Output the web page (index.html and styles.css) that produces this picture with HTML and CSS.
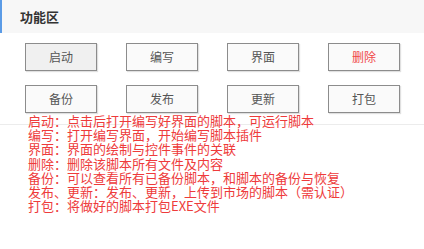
FILE: index.html
```html
<!DOCTYPE html>
<html lang="zh">
<head>
    <meta charset="UTF-8">
    <meta name="viewport" content="width=device-width, initial-scale=1.0">
    <link rel="stylesheet" href="styles.css">
</head>
<body>

<div class="header">功能区</div>

<div class="panel">
    <div class="btn active">启动</div>
    <div class="btn">编写</div>
    <div class="btn">界面</div>
    <div class="btn danger">删除</div>
    <div class="btn">备份</div>
    <div class="btn">发布</div>
    <div class="btn">更新</div>
    <div class="btn">打包</div>
</div>

<div class="notes">
    <div>启动：点击后打开编写好界面的脚本，可运行脚本</div>
    <div>编写：打开编写界面，开始编写脚本插件</div>
    <div>界面：界面的绘制与控件事件的关联</div>
    <div>删除：删除该脚本所有文件及内容</div>
    <div>备份：可以查看所有已备份脚本，和脚本的备份与恢复</div>
    <div>发布、更新：发布、更新，上传到市场的脚本（需认证）</div>
    <div>打包：将做好的脚本打包EXE文件</div>
</div>

</body>
</html>
```

FILE: styles.css
```css
body {
    margin: 0;
    background: #fff;
    font-family: "Noto Sans CJK SC", "Liberation Sans", sans-serif;
}

.header {
    height: 33px;
    line-height: 33px;
    padding-left: 18px;
    border-left: 2px solid #5b9be6;
    background: #f7f7f7;
    color: #333;
    font-size: 13px;
    font-weight: 700;
}

.panel {
    display: grid;
    grid-template-columns: repeat(4, 72px);
    column-gap: 29px;
    row-gap: 14px;
    padding: 10px 0 11px 25px;
    border-bottom: 1px solid #ececec;
}

.btn {
    height: 26px;
    line-height: 26px;
    border: 1px solid #8c8c8c;
    background: #fafafa;
    box-shadow: 1px 1px 1px rgba(0, 0, 0, 0.12);
    text-align: center;
    color: #555;
    font-size: 12px;
}

.btn.active {
    background: #f0f0f0;
}

.btn.danger {
    color: #f04848;
}

.notes {
    margin-top: -11px;
    padding-left: 28px;
    color: #ee3b3b;
    font-size: 13px;
    line-height: 14.2px;
}
```
